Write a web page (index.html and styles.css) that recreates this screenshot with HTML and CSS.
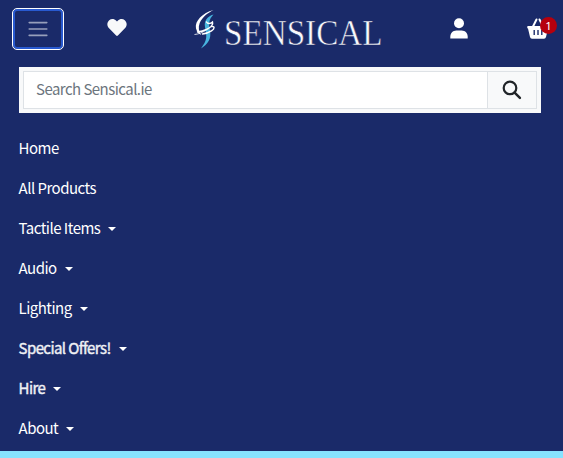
FILE: index.html
```
<!DOCTYPE html>
<html lang="en">
<head>
<meta charset="utf-8">
<title>Sensical</title>
<link rel="stylesheet" href="styles.css">
</head>
<body>
<header class="navbar">
  <div class="topbar">
    <button class="toggler" aria-label="Menu">
      <svg width="24" height="24" viewBox="0 0 30 30"><path d="M4 7h22M4 15h22M4 23h22" stroke="#fff" stroke-opacity=".55" stroke-width="2" stroke-linecap="round"/></svg>
    </button>
    <a class="heart" href="#" aria-label="Wishlist"><svg width="20" height="17" viewBox="0 0 512 450"><path fill="#f8f9fa" d="M462 31C407-15 326-7 276 45l-20 20-20-20C186-7 105-15 50 31c-63 54-66 150-10 208l193 200c13 13 33 13 46 0l193-200c56-58 53-154-10-208z"/></svg></a>
    <a class="brand" href="#" aria-label="Sensical">
      <svg width="196" height="50" viewBox="0 0 196 50">
        <path fill="#48b4df" d="M20.500 6.500C14 8.500 11 13 12 19c1 7 2.500 10-.5 16l-3.500 5.500c7-4.500 10.500-9.500 9-18-1.500-6-1.500-11 3.500-16z"/>
        <path fill="#fff" d="M20.500 2C9.500 5 1.500 13 3 20.500c.8 3.500 3 5.500 5 6.500-2.200-4-3-7.500-1.300-12C9.500 9 14 5.500 20.500 2z"/>
        <path fill="none" stroke="#fff" stroke-width="1.400" stroke-linecap="round" d="M13.500 14c1 2 4 2 6 0 1 3-2 5.500-6 7.500-3 1.500-6 2.200-9 2.500M18 18.500c4-.5 4 2 .5 4.300-3 2-6 2.700-9 3.200"/>
        <path fill="none" stroke="#fff" stroke-width=".8" d="M1.500 26.500c4-.5 8-1.500 12-5"/>
        <text class="wordmark" x="31" y="36.500" textLength="158.500" lengthAdjust="spacingAndGlyphs">SENSICAL</text>
      </svg>
    </a>
    <a class="user" href="#" aria-label="Account"><svg width="18" height="21" viewBox="0 0 18 21"><circle cx="9" cy="5.200" r="5" fill="#fff"/><path fill="#fff" d="M.3 20.600v-2c0-3.300 2.500-6.200 6-6.200h5.400c3.500 0 6 2.900 6 6.200v2z"/></svg></a>
    <a class="basket" href="#" aria-label="Basket"><svg width="22" height="21" viewBox="0 0 22 21"><path d="M5.500 9.500 9.500 1.500M16.500 9.500 12.500 1.500" stroke="#fff" stroke-width="2" stroke-linecap="round"/><path fill="#fff" fill-rule="evenodd" d="M1 8h20q.8 0 .8 1.200t-.8 1.300l-2 8.500q-.4 1.700-2 1.700H5q-1.600 0-2-1.700l-2-8.500Q.2 10.400.2 9.200T1 8zM6.500 12v5h1.400v-5zM10.300 12v5h1.400v-5zM14.100 12v5h1.400v-5z"/></svg><span class="badge">1</span></a>
  </div>
  <form class="search">
    <input class="field" type="text" placeholder="Search Sensical.ie">
    <button class="go" type="button" aria-label="Search"><svg width="20" height="20" viewBox="0 0 20 20" fill="none" stroke="#212529"><circle cx="8" cy="7.900" r="6.300" stroke-width="2.200"/><path d="m12.600 12.600 5.300 5.200" stroke-width="2.500" stroke-linecap="round"/></svg></button>
  </form>
  <nav class="menu">
    <a href="#">Home</a>
    <a href="#">All Products</a>
    <a class="drop" href="#">Tactile Items</a>
    <a class="drop" href="#">Audio</a>
    <a class="drop" href="#">Lighting</a>
    <a class="drop strong" href="#">Special Offers!</a>
    <a class="drop strong" href="#">Hire</a>
    <a class="drop" href="#">About</a>
  </nav>
</header>
<div class="strip"></div>
</body>
</html>
```
FILE: styles.css
```
* { box-sizing: border-box; }
body {
  margin: 0;
  height: 458px;
  overflow: hidden;
  background: #1a2a69;
  font-family: "Noto Sans CJK JP", "Noto Sans", sans-serif;
  font-size: 15px;
  letter-spacing: -.52px;
}
svg { display: block; }
.navbar { height: 451px; }
.topbar { display: flex; height: 67px; padding: 8px 5px 0 12px; }
.toggler {
  display: flex;
  align-items: center;
  justify-content: center;
  width: 52px;
  height: 42px;
  padding: 0;
  background: transparent;
  border: 1px solid #fff;
  border-radius: 5px;
  box-shadow: inset 0 0 0 2px #2859cf;
}
.heart { margin: 11px 0 0 43px; }
.brand { margin-left: 66px; }
.wordmark {
  font-family: "Liberation Serif", serif;
  font-size: 35px;
  letter-spacing: 0;
  fill: #f8f9fc;
  stroke: #1a2a69;
  stroke-width: .5px;
}
.user { margin: 10px 0 0 61px; }
.basket { position: relative; margin: 10px 0 0 59px; }
.badge {
  position: absolute;
  left: 13px;
  top: -1px;
  width: 17px;
  height: 17px;
  border-radius: 50%;
  background: #b6000d;
  color: #fff;
  font-family: "Noto Sans", sans-serif;
  font-size: 11.5px;
  letter-spacing: 0;
  line-height: 17px;
  text-align: center;
}
.search {
  display: flex;
  width: 522px;
  height: 46px;
  margin: 0 0 0 19px;
  padding: 4px;
  background: #f8f9fa;
}
.field {
  flex: 1;
  min-width: 0;
  padding: 0 12px 4px;
  border: 1px solid #dee2e6;
  background: #fff;
  font: inherit;
  letter-spacing: -.54px;
}
.field::placeholder { color: #6c757d; opacity: 1; }
.go {
  display: flex;
  align-items: center;
  justify-content: center;
  width: 49px;
  padding: 0;
  border: 1px solid #dee2e6;
  border-left: 0;
  background: #f8f9fa;
}
.menu { display: flex; flex-direction: column; padding: 16px 0 0 18.600px; }
.menu a {
  display: flex;
  align-items: center;
  height: 40px;
  padding-bottom: 4px;
  color: #fff;
  text-decoration: none;
}
.menu .strong { color: #f0f1f5; letter-spacing: -.6px; -webkit-text-stroke: .4px #f0f1f5; }
.drop::after {
  content: "";
  margin: 3px 0 0 8px;
  border-top: 4px solid #fff;
  border-left: 4px solid transparent;
  border-right: 4px solid transparent;
}
.strip { height: 7px; background: #86e3ff; }
```
